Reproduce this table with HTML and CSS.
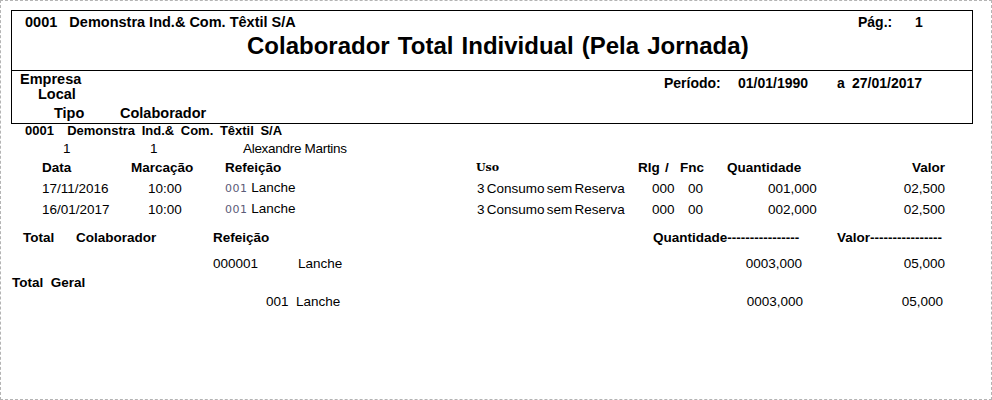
FILE: index.html
```html
<!DOCTYPE html>
<html lang="pt">
<head>
<meta charset="utf-8">
<link rel="stylesheet" href="styles.css">
</head>
<body>
<div class="page">
  <div class="hbox">
    <div class="hbox-top">
      <div class="line1">
        <span class="company">0001&nbsp;&nbsp;&nbsp;Demonstra Ind.&amp; Com. Têxtil S/A</span>
        <span class="pag"><span class="pag-lbl">Pág.:</span><span>1</span></span>
      </div>
      <div class="title">Colaborador Total Individual (Pela Jornada)</div>
    </div>
    <div class="hbox-bottom">
      <div class="labels">
        <div class="lbl-empresa">Empresa</div>
        <div class="lbl-local">Local</div>
        <div class="lbl-tipo"><span class="tipo">Tipo</span><span>Colaborador</span></div>
      </div>
      <div class="periodo"><span class="p-lbl">Período:</span><span class="p-d1">01/01/1990</span><span class="p-a">a</span><span>27/01/2017</span></div>
    </div>
  </div>

  <div class="emp-line">0001&nbsp; Demonstra Ind.&amp; Com. Têxtil S/A</div>
  <div class="colab-line"><span class="c1">1</span><span class="c2">1</span><span>Alexandre Martins</span></div>

  <div class="dhead">
    <span>Data</span><span>Marcação</span><span>Refeição</span><span class="uso">Uso</span>
    <span class="rlg"><span>Rlg</span><span>/</span><span>Fnc</span></span>
    <span>Quantidade</span><span class="r">Valor</span>
  </div>
  <div class="drow">
    <span>17/11/2016</span><span>10:00</span><span><span class="code">001</span> Lanche</span><span class="uso-v">3 Consumo sem Reserva</span><span>000</span><span>00</span><span class="r">001,000</span><span class="r">02,500</span>
  </div>
  <div class="drow">
    <span>16/01/2017</span><span>10:00</span><span><span class="code">001</span> Lanche</span><span class="uso-v">3 Consumo sem Reserva</span><span>000</span><span>00</span><span class="r">002,000</span><span class="r">02,500</span>
  </div>

  <div class="thead">
    <span>Total</span><span>Colaborador</span><span>Refeição</span><span>Quantidade----------------</span><span>Valor----------------</span>
  </div>
  <div class="trow">
    <span>000001</span><span>Lanche</span><span class="r">0003,000</span><span class="r">05,000</span>
  </div>
  <div class="geral">Total&nbsp; Geral</div>
  <div class="grow">
    <span>001&nbsp; Lanche</span><span class="r">0003,000</span><span class="r">05,000</span>
  </div>
</div>
</body>
</html>
```

FILE: styles.css
```css
* { box-sizing: border-box; }
html, body { margin: 0; padding: 0; background: #fff; }
body {
  font-family: "Liberation Sans", Arial, sans-serif;
  color: #000;
  font-size: 13.5px;
}
.page {
  width: 992px;
  height: 400px;
  border: 1px dashed #b4b4b4;
  padding-top: 9px;
  overflow: hidden;
}
.hbox {
  margin-left: 10px;
  width: 962px;
  border: 1px solid #000;
}
.hbox-top {
  height: 60px;
  border-bottom: 1px solid #000;
  padding-top: 3px;
}
.line1 {
  display: flex;
  height: 16px;
  line-height: 16px;
  font-weight: bold;
}
.company {
  font-size: 14.5px;
  padding-left: 13px;
  width: 846px;
}
.pag { font-size: 14px; display: flex; }
.pag-lbl { width: 57px; }
.title {
  margin-top: 2px;
  padding-left: 235px;
  font-size: 24px;
  word-spacing: 1.5px;
  font-weight: bold;
  line-height: 28px;
  height: 28px;
}
.hbox-bottom {
  height: 52px;
  display: flex;
  font-weight: bold;
  font-size: 14.5px;
  padding-top: 1px;
}
.labels { width: 652px; line-height: 15px; }
.lbl-empresa { padding-left: 8px; height: 15px; }
.lbl-local { padding-left: 26px; height: 15px; margin-bottom: 4px; }
.lbl-tipo { display: flex; padding-left: 42px; }
.tipo { width: 66px; }
.periodo {
  display: flex;
  line-height: 15px;
  padding-top: 4px;
  font-size: 14px;
}
.p-lbl { width: 74px; }
.p-d1 { width: 99px; }
.p-a { width: 15px; }

.emp-line {
  font-weight: bold;
  font-size: 13px;
  word-spacing: 3px;
  padding-left: 24px;
  height: 14px;
  line-height: 14px;
}
.colab-line {
  display: flex;
  padding-left: 62px;
  height: 21px;
  line-height: 21px;
}
.colab-line span { letter-spacing: -0.3px; }
.c1 { width: 87px; }
.c2 { width: 93px; }

.dhead, .drow, .thead, .trow, .grow { display: grid; align-items: center; }
.r { text-align: right; }

.dhead {
  font-weight: bold;
  padding-left: 41px;
  height: 18px;
  line-height: 18px;
  grid-template-columns: 89px 94px 251px 162px 89px 77px 141px;
}
.uso {
  font-family: "DejaVu Serif", "Liberation Serif", serif;
  font-size: 11px;
}
.rlg { display: flex; }
.rlg span:nth-child(1) { width: 27px; }
.rlg span:nth-child(2) { width: 15px; }

.drow {
  padding-left: 41px;
  height: 21px;
  line-height: 21px;
  grid-template-columns: 106px 77px 252px 175px 36px 80px 36px 141px;
}
.code {
  color: #5b5b78;
  font-family: "DejaVu Sans", sans-serif;
  font-size: 11px;
  letter-spacing: 0.5px;
}
.uso-v { word-spacing: -1.5px; }

.thead {
  margin-top: 8px;
  font-weight: bold;
  padding-left: 22px;
  height: 21px;
  line-height: 21px;
  grid-template-columns: 53px 137px 440px 184px 120px;
}
.trow {
  margin-top: 5px;
  padding-left: 212px;
  height: 21px;
  line-height: 21px;
  grid-template-columns: 85px 100px 404px 143px;
}
.geral {
  font-weight: bold;
  padding-left: 11px;
  height: 17px;
  line-height: 17px;
}
.grow {
  margin-top: 0;
  padding-left: 265px;
  height: 21px;
  line-height: 21px;
  grid-template-columns: 200px 337px 140px;
}
```
